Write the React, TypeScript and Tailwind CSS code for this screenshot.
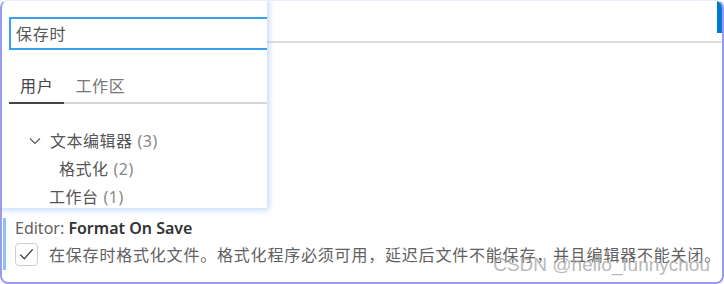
import React from "react";

const cjk = { fontFamily: '"Noto Sans", "Noto Sans CJK SC", sans-serif' };

export default function App() {
  return (
    <div
      className="relative w-[724px] h-[284px] overflow-hidden rounded-[8px] border-x-2 border-b-2 border-t border-x-[#9a9af0] border-b-[#9a9af0] border-t-[#ececff] bg-white"
      style={cjk}
    >
      {/* background: search bar row */}
      <div className="h-[42px] border-b-2 border-[#dddddd] flex justify-end items-start">
        <div className="w-[5px] h-[33px] -mt-px bg-[#0078d4]" />
      </div>

      {/* setting */}
      <div className="mt-[175px] ml-px border-l-[3px] border-[#8cc2ee] pl-[9px] pb-[4px]">
        <div className="text-[16px] leading-[20px] text-[#616161]">
          Editor: <span className="font-semibold text-[#333333]">Format On Save</span>
        </div>
        <div className="mt-[5px] flex items-center">
          <div className="w-[23px] h-[23px] rounded-[4px] border border-[#cecece] flex items-center justify-center shrink-0">
            <svg width="17" height="17" viewBox="0 0 16 16" fill="none">
              <path d="M2.5 8.5 L6 12 L13.5 3.5" stroke="#444" strokeWidth="1.2" strokeLinecap="round" strokeLinejoin="round" />
            </svg>
          </div>
          <div className="ml-[11px] text-[16px] leading-[22px] tracking-[0.8px] whitespace-nowrap text-[#616161]">
            在保存时格式化文件。格式化程序必须可用，延迟后文件不能保存，并且编辑器不能关闭。
          </div>
        </div>
      </div>

      {/* watermark */}
      <div
        className="absolute right-[12px] bottom-[6px] text-[19px] leading-[22px] text-[#a8a8a8] opacity-80"
        style={{ fontFamily: '"Liberation Sans", Arial, sans-serif' }}
      >
        CSDN @hello_funnychou
      </div>

      {/* dropdown panel */}
      <div className="absolute left-0 top-0 w-[265px] h-[207px] overflow-hidden bg-white shadow-[0_0_6px_2px_rgba(110,170,255,0.45)]">
        <div className="pl-[7px] pt-[16px]">
          <div className="w-[300px] h-[33px] border-2 border-[#3aa0ee] pl-[5px] flex items-center text-[16px] tracking-[0.7px] text-[#555555]">
            保存时
          </div>
          <div className="flex border-b-2 border-[#d6d6d6]">
            <div className="-mb-[2px] px-[11px] pt-[24px] pb-[4px] leading-[24px] border-b-2 border-[#444444] text-[16px] tracking-[0.7px] text-[#444444]">
              用户
            </div>
            <div className="-mb-[2px] px-[11px] pt-[24px] pb-[4px] leading-[24px] border-b-2 border-transparent text-[16px] tracking-[0.7px] text-[#777777]">
              工作区
            </div>
          </div>
        </div>
        <div className="mt-[23px] text-[16px] tracking-[0.5px] text-[#555555]">
          <div className="h-[28px] flex items-center pl-[27px]">
            <svg width="12" height="12" viewBox="0 0 12 12" fill="none" className="mr-[9px]">
              <path d="M1 3.5 L6 8.5 L11 3.5" stroke="#555" strokeWidth="1.1" />
            </svg>
            <span>文本编辑器</span>
            <span className="ml-[5px] text-[#888888]">(3)</span>
          </div>
          <div className="h-[28px] flex items-center pl-[57px]">
            <span>格式化</span>
            <span className="ml-[5px] text-[#888888]">(2)</span>
          </div>
          <div className="h-[28px] flex items-center pl-[47px]">
            <span>工作台</span>
            <span className="ml-[5px] text-[#888888]">(1)</span>
          </div>
        </div>
      </div>
    </div>
  );
}
